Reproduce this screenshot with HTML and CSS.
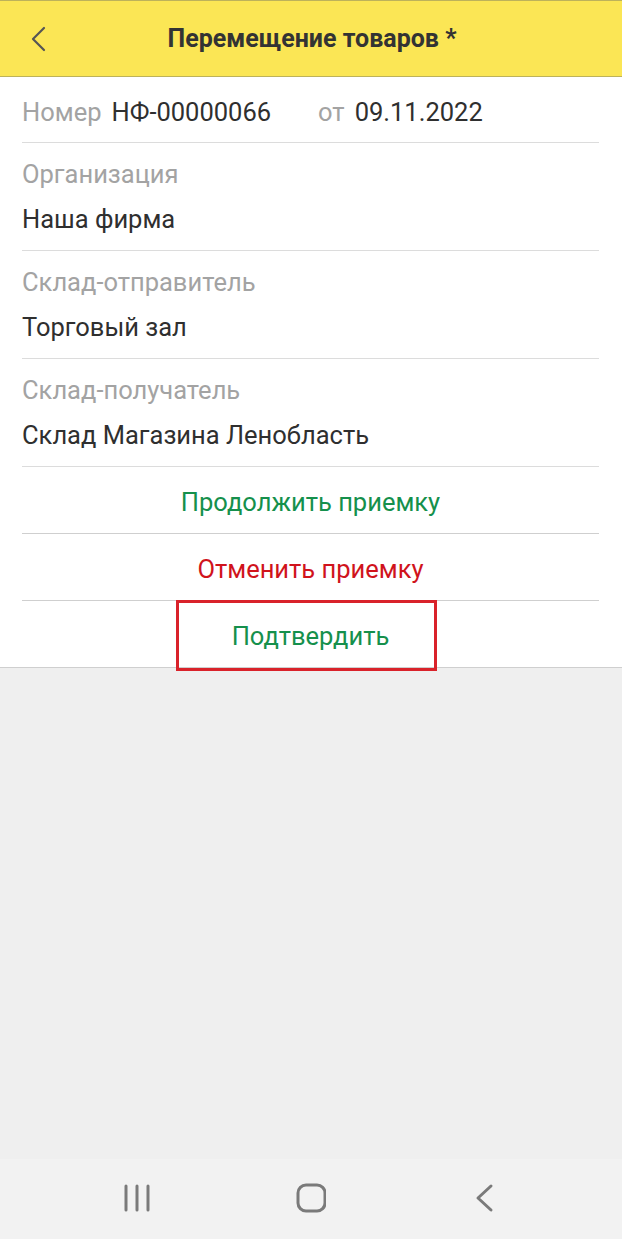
FILE: index.html
```html
<!DOCTYPE html>
<html lang="ru">
<head>
  <meta charset="UTF-8" />
  <meta name="viewport" content="width=device-width, initial-scale=1.0"/>
  <title>Перемещение товаров</title>
  <link rel="stylesheet" href="styles.css">
</head>
<body>

  <!-- Шапка формы -->
  <header class="topo">
    <svg class="voltar" width="24" height="30" viewBox="0 0 24 30">
      <polyline points="17,4 6,15 17,26" fill="none" stroke="#555" stroke-width="2.2" stroke-linecap="round" stroke-linejoin="round"/>
    </svg>
    <h1>Перемещение товаров *</h1>
  </header>

  <main class="formulario">
    <div class="linha-numero">
      <span class="rotulo">Номер</span>
      <span class="valor">НФ-00000066</span>
      <span class="rotulo rotulo-de">от</span>
      <span class="valor">09.11.2022</span>
    </div>

    <div class="campo">
      <div class="rotulo">Организация</div>
      <div class="valor">Наша фирма</div>
    </div>

    <div class="campo">
      <div class="rotulo">Склад-отправитель</div>
      <div class="valor">Торговый зал</div>
    </div>

    <div class="campo">
      <div class="rotulo">Склад-получатель</div>
      <div class="valor">Склад Магазина Ленобласть</div>
    </div>

    <div class="acao verde">Продолжить приемку</div>
    <div class="acao vermelho">Отменить приемку</div>
    <div class="acao verde ultima">
      Подтвердить
      <span class="destaque"></span>
    </div>
  </main>

  <div class="vazio"></div>

  <!-- Навигация Android -->
  <nav class="navegacao">
    <svg width="30" height="30" viewBox="0 0 30 30">
      <g stroke="#7a7a7a" stroke-width="3" stroke-linecap="round">
        <line x1="4" y1="3" x2="4" y2="27"/>
        <line x1="15" y1="3" x2="15" y2="27"/>
        <line x1="26" y1="3" x2="26" y2="27"/>
      </g>
    </svg>
    <svg width="30" height="30" viewBox="0 0 30 30">
      <rect x="2" y="2" width="27" height="26" rx="8" fill="none" stroke="#7a7a7a" stroke-width="3"/>
    </svg>
    <svg width="30" height="30" viewBox="0 0 30 30">
      <polyline points="22,3 9,15 22,27" fill="none" stroke="#7a7a7a" stroke-width="3" stroke-linecap="round" stroke-linejoin="round"/>
    </svg>
  </nav>

</body>
</html>
```

FILE: styles.css
```css
:root {
  --amarelo: #fbe655;
  --cinza-texto: #a3a3a3;
  --escuro: #2f2f2f;
  --verde: #15904c;
  --vermelho: #d0131c;
  --linha: #dcdcdc;
}

* {
  margin: 0;
  padding: 0;
  box-sizing: border-box;
}

body {
  font-family: Roboto, "Noto Sans", Arial, sans-serif;
  background-color: #efefef;
  color: var(--escuro);
  display: flex;
  flex-direction: column;
  height: 1239px;
  overflow: hidden;
}

.topo {
  height: 77px;
  background-color: var(--amarelo);
  border-top: 1px solid #bdb25a;
  border-bottom: 1px solid #bdb25a;
  display: flex;
  align-items: center;
  justify-content: center;
  position: relative;
}

.voltar {
  position: absolute;
  left: 27px;
  top: 23px;
}

.topo h1 {
  font-size: 25px;
  font-weight: bold;
  color: #333;
  margin-left: 2px;
}

.formulario {
  background-color: #fff;
  padding: 0 23px 0 22px;
  border-bottom: 1px solid #cfcfcf;
  font-size: 25.5px;
}

.rotulo {
  color: var(--cinza-texto);
}

.valor {
  color: var(--escuro);
}

.linha-numero {
  height: 66px;
  display: flex;
  align-items: center;
  gap: 10px;
  padding-top: 5px;
  border-bottom: 1px solid var(--linha);
}

.rotulo-de {
  margin-left: 37px;
}

.campo {
  padding: 11px 0 6px;
  border-bottom: 1px solid var(--linha);
}

.campo .rotulo {
  line-height: 40px;
}

.campo .valor {
  line-height: 50px;
}

.acao {
  height: 67px;
  display: flex;
  align-items: center;
  justify-content: center;
  border-bottom: 1px solid #cfcfcf;
  padding-top: 3px;
  position: relative;
}

.verde {
  color: var(--verde);
}

.vermelho {
  color: var(--vermelho);
}

.ultima {
  border-bottom: none;
  height: 66px;
}

/* рамка выделения */
.destaque {
  position: absolute;
  left: 154px;
  width: 261px;
  top: -1px;
  bottom: -4px;
  border: 3px solid #d9222a;
}

.vazio {
  flex: 1;
}

.navegacao {
  height: 80px;
  background-color: #f2f2f2;
  display: flex;
  align-items: center;
  justify-content: space-between;
  padding: 0 123px 2px 122px;
}
```
